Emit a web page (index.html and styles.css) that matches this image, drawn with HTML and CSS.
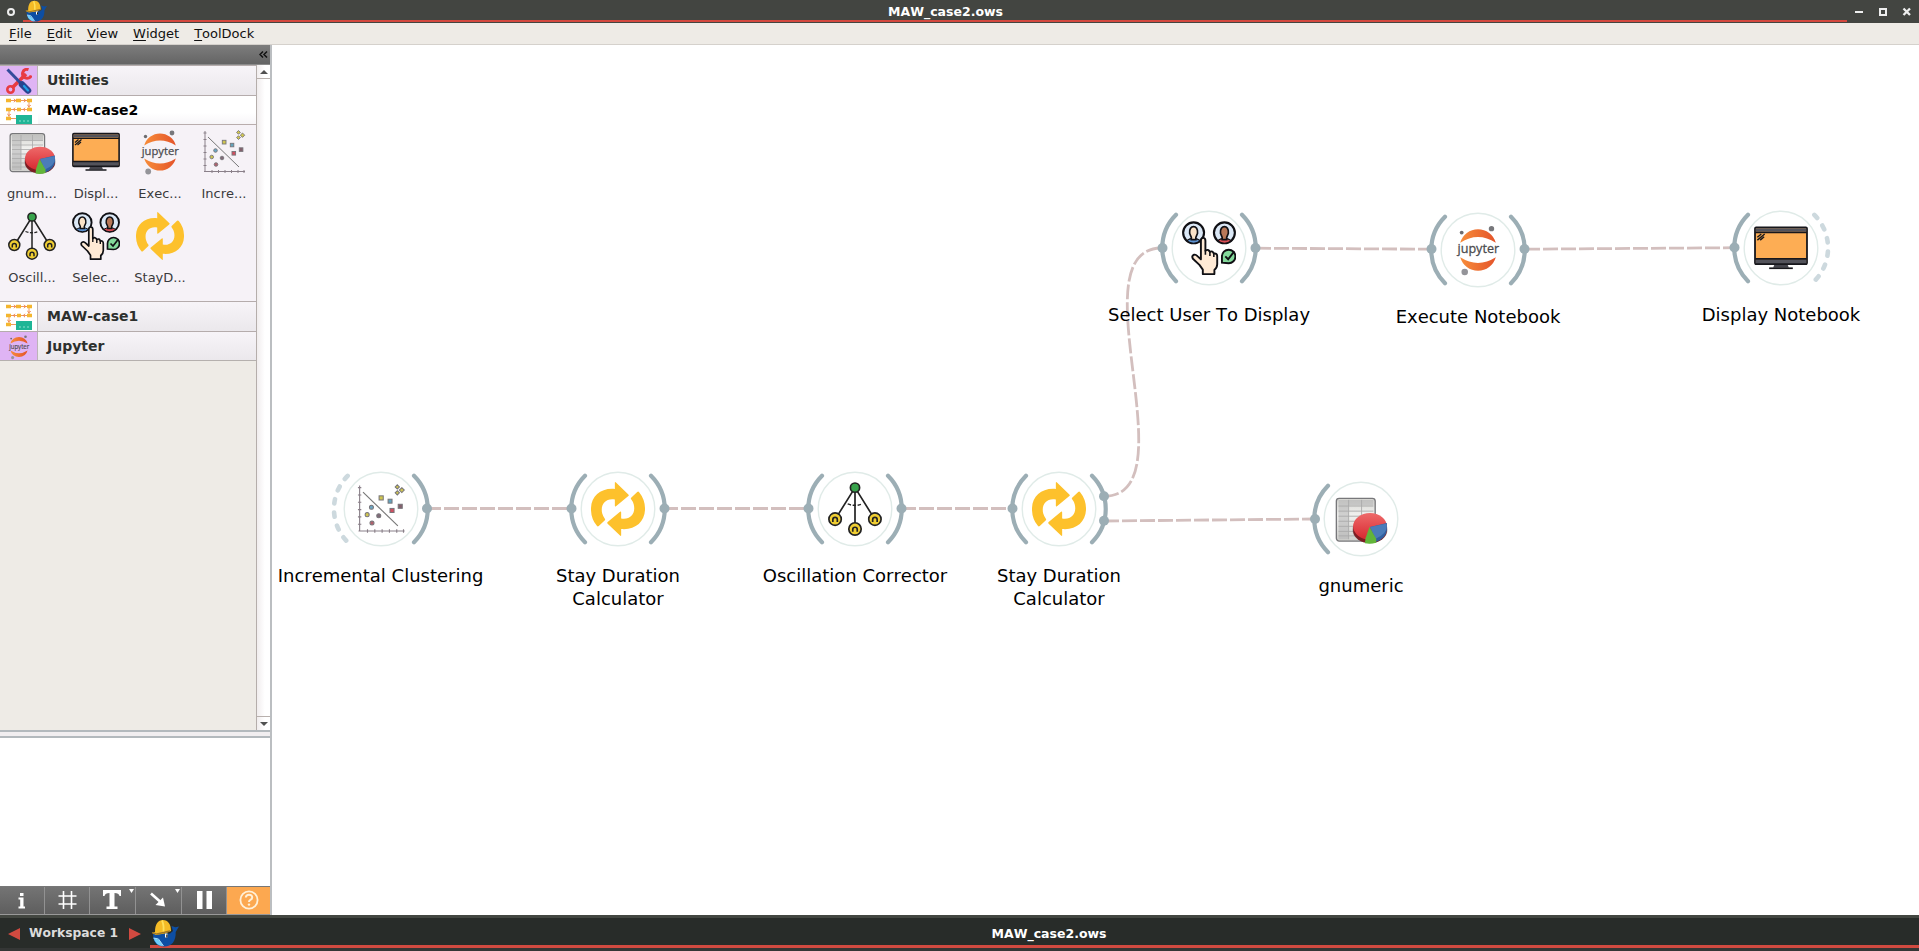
FILE: index.html
```html
<!DOCTYPE html>
<html lang="en">
<head>
<meta charset="utf-8">
<title>MAW_case2.ows</title>
<link rel="stylesheet" href="styles.css">
</head>
<body>
<svg class="defs" width="0" height="0" aria-hidden="true">
  <defs>
    <linearGradient id="jup" x1="0" x2="1" y1="0" y2="0"><stop offset="0" stop-color="#f78d3a"/><stop offset="1" stop-color="#e4542a"/></linearGradient>
    <linearGradient id="sheet" x1="0" x2="0" y1="0" y2="1"><stop offset="0" stop-color="#d4d4d0"/><stop offset=".4" stop-color="#f1f1ef"/><stop offset="1" stop-color="#cfcfcc"/></linearGradient>
    <linearGradient id="pie" x1="0" x2="0" y1="0" y2="1"><stop offset="0" stop-color="#ee6a6a"/><stop offset="1" stop-color="#d82830"/></linearGradient>
    <symbol id="i-gnumeric" viewBox="0 0 48 48">
      <rect x="2.100" y="5.600" width="34.500" height="38" rx="2.500" fill="url(#sheet)" stroke="#77777a" stroke-width="1.200"/>
      <path d="M4 7h31v5H4zM4 12h9v30H4z" fill="#a9a9aa" opacity=".45"/>
      <path d="M13 7v35M24.500 7v35M4 12.500h31M4 17h31M4 21.500h31M4 26h31M4 30.500h31M4 35h31M4 39h31" stroke="#aaa" stroke-width=".8" fill="none"/>
      <ellipse cx="32" cy="33.500" rx="15.600" ry="12" fill="#3b2730" opacity=".35"/>
      <path d="M17 30.500v4a15 10.800 0 0 0 30 0v-4z" fill="#7e1c22"/>
      <ellipse cx="32" cy="30.500" rx="15" ry="11.800" fill="url(#pie)"/>
      <path d="M32 31 47 27.500v6.500q-1 7.500-10 10.500z" fill="#3160a0"/>
      <path d="M32 31 46.800 28q1.500 9-9.800 13.500z" fill="#4b7cb9"/>
      <path d="M31.500 31l6 10.500v3.500q-5 1.500-10 .5l.5-4.500z" fill="#62b53a"/>
    </symbol>
    <symbol id="i-monitor" viewBox="0 0 48 48">
      <rect x=".9" y="5.600" width="46.200" height="32.800" rx="1" fill="#fdad54" stroke="#17171c" stroke-width="1.600"/>
      <path d="M1.500 6.500h45v3h-45z" fill="#53535b"/><path d="M1 10.300h46" stroke="#17171c" stroke-width="1.300"/>
      <path d="M1.500 34h45v4.200h-45z" fill="#53535b"/><path d="M1 33.600h46M1 38.300h46" stroke="#17171c" stroke-width="1.500"/>
      <path d="M18 39h12l1 2.500H17z" fill="#44444c"/><path d="M13.500 42h21" stroke="#17171c" stroke-width="1.500"/>
      <path d="M3 17 9.500 11.500M3 14.500l3.500-3M5.500 17 9 14" stroke="#17171c" stroke-width="1.200"/>
    </symbol>
    <symbol id="i-jupyter" viewBox="0 0 48 48">
      <path d="M8.200 17.500a16.400 16.400 0 0 1 31.600 0Q24 7.500 8.200 17.500z" fill="url(#jup)"/>
      <path d="M8.200 30.500a16.400 16.400 0 0 0 31.600 0Q24 40.500 8.200 30.500z" fill="url(#jup)"/>
      <circle cx="9.500" cy="8.500" r="1.700" fill="#6c6c70"/><circle cx="36" cy="5" r="2.400" fill="#77777b"/><circle cx="12.200" cy="43.500" r="2.900" fill="#949499"/>
      <text x="24.300" y="26.800" text-anchor="middle" textLength="37" lengthAdjust="spacingAndGlyphs" class="jt">jupyter</text>
    </symbol>
    <symbol id="i-cluster" viewBox="0 0 48 48">
      <g fill="none" stroke="#8a8089" stroke-width="1"><path d="M5 3v41M4 43.500h41M3.500 5h3M3.500 11.500h3M3.500 18h3M3.500 24.500h3M3.500 31h3M3.500 37.500h3M12 42v3M18.500 42v3M25 42v3M31.500 42v3M38 42v3M44 42v3"/><path d="M8 9 39 39" stroke="#777"/></g>
      <g stroke="#77757a" stroke-width=".9"><g fill="#cfc54f"><rect x="22.300" y="12.300" width="3.700" height="3.700"/><circle cx="11.700" cy="29" r="1.800"/><path d="M38.500 2.500l1.900 1.900-1.900 1.900-1.900-1.900zM42.500 5l2.200 2.200-2.200 2.200-2.200-2.200zM38.500 7.700l1.900 1.900-1.900 1.900-1.900-1.900z"/></g><rect x="30.300" y="15.300" width="3.500" height="3.500" fill="#62a3bd"/><circle cx="15.500" cy="22.500" r="1.800" fill="#6aa7c4"/><rect x="39.300" y="19.800" width="3.600" height="3.600" fill="#83606c"/><rect x="32" y="23.500" width="3.600" height="3.600" fill="#d04f60"/><circle cx="22" cy="30" r="1.800" fill="#806a78"/><circle cx="16" cy="36.500" r="1.800" fill="#b0606c"/></g>
    </symbol>
    <symbol id="i-osc" viewBox="0 0 48 48">
      <path d="M24 5 6.500 33M24 5v36M24 5l17.500 28" stroke="#222" stroke-width="1.500"/><path d="M17.500 19.500q6.500 2.500 13 0" fill="none" stroke="#222" stroke-width="1.300" stroke-dasharray="3 1.500"/>
      <circle cx="24" cy="5" r="4.100" fill="#37a34b" stroke="#222" stroke-width="1.500"/>
      <g fill="#f0ce32" stroke="#222" stroke-width="1.500"><circle cx="6.300" cy="33" r="5.500"/><circle cx="41.700" cy="33" r="5.500"/><circle cx="24" cy="41.700" r="5.500"/></g>
      <g fill="none" stroke="#222" stroke-width="1.500"><path d="M4.300 35.500v-2a2 2 0 0 1 4 0v2M39.700 35.500v-2a2 2 0 0 1 4 0v2M22 44.200v-2a2 2 0 0 1 4 0v2"/></g>
    </symbol>
    <symbol id="i-select" viewBox="0 0 48 48">
      <g stroke="#101014" stroke-width="1.900"><circle cx="10.300" cy="10.500" r="9.300" fill="#dbe8f6"/><circle cx="37.700" cy="10.500" r="9.300" fill="#dbe8f6"/></g>
      <path d="M4 17.500q6-4 12.500 0-6 4.500-12.500 0z" fill="#5c91cf" stroke="#101014"/><path d="M31.500 17.500q6-4 12.500 0-6 4.500-12.500 0z" fill="#d94e55" stroke="#101014"/>
      <path d="M6.800 11c-1-8 8-8 7 0l-1.500 3.500v2h-4v-2z" fill="#fbe3c8" stroke="#101014" stroke-width="1.500"/><path d="M34.200 11c-1-8 8-8 7 0l-1.500 3.500v2h-4v-2z" fill="#b87858" stroke="#101014" stroke-width="1.500"/>
      <path d="M16.800 34V17.500q0-2.500 2-2.500t2 2.500v9q2.500-2 4 1 2.500-1.500 3.500 1.500 3-.5 3 2.500v7q0 3-2.500 5v3.700H18.500v-4l-3-4.200-5.800-5.500q-1.500-2.500 1-3.500 1.500-.4 3 1.200z" fill="#ffead5" stroke="#101014" stroke-width="1.700" stroke-linejoin="round"/>
      <path d="M20.800 26v4M24.800 27v4M28.300 29v3" stroke="#101014" stroke-width="1.400"/>
      <path d="M35.500 37v-5.500a6 6 0 1 1 6 6z" fill="#83d99b" stroke="#101014" stroke-width="1.700"/><path d="M38.500 31.500l2.500 2.500 5.500-7" fill="none" stroke="#101014" stroke-width="1.700"/>
    </symbol>
    <symbol id="i-stay" viewBox="0 0 48 48">
      <g fill="#fdc12c"><path id="sw" d="M0 25C-.5 13 8.500 5 21.200 6.200V.6q0-1 1-.2L33.200 11q.8.700 0 1.400L22.200 21.500q-1 .6-1-.5v-5.500C13 14 8 20 10 28q.8 2.800 2.300 4.600.7.900-.2 1.600l-5.200 5q-.9.800-1.700-.2Q.3 33 0 25z"/><use href="#sw" transform="rotate(180 24 24)"/></g>
    </symbol>
    <symbol id="i-flow" viewBox="0 0 26 26">
      <path d="M2 2.500h21v9M23 11.500H3v9h8" fill="none" stroke="#ee9a5c" stroke-width="1"/>
      <g fill="#f4b62f"><path d="M0 .8h5v3.400H0zM10 .8h5v3.400h-5zM21 .8h5v3.400h-5zM0 9.800h5v3.400H0zM11 9.800h4v3.400h-4zM21 9.800h5v3.400h-5zM0 18.800h5v3.400H0z"/></g>
      <path d="M8 .8l1.700 1.700L8 4.200M18 .8l1.700 1.700L18 4.200M21.300 7l1.700 1.700L24.700 7M9 9.800l-1.700 1.700L9 13.200M19 9.800l-1.700 1.700 1.700 1.700M1.300 16 3 17.700 4.700 16" fill="none" stroke="#ee7c45"/>
      <path d="M10 17h16v9H10z" fill="#1fb596"/><path d="M13 23h2M17 23h2M21 23h2" stroke="#8de0cd" stroke-width="1.200"/>
    </symbol>
    <symbol id="i-tools" viewBox="0 0 26 26">
      <path d="M6 20 20 6" stroke="#e83b43" stroke-width="3.500"/><circle cx="4.500" cy="21.500" r="3.200" fill="none" stroke="#e83b43" stroke-width="2.600"/><path d="M22.500 1.500a4.500 4.500 0 1 0 2.700 6" fill="none" stroke="#e83b43" stroke-width="3"/>
      <path d="M1.500 1.500 16 16.500" stroke="#344b9c" stroke-width="3"/><path d="M16 16.500 22 22.500" stroke="#29448f" stroke-width="6.500" stroke-linecap="round"/><path d="M18 18l4 4.500" stroke="#20a0e8" stroke-width="2.200" stroke-linecap="round"/>
    </symbol>
    <symbol id="i-whale" viewBox="0 0 28 28">
      <path d="M2 15C2 24 7 27.500 13 27.500c8 0 12-5.500 11.700-14.500L28 7.500l-3.500.8L20.500 7l1.500 5-3 2.500z" fill="#0d4ea3"/>
      <path d="M2.500 19q6 0 9.500 8.300Q4.500 26.500 2.500 19z" fill="#70cdfb"/><path d="M2.500 19l5 1 5 7" fill="none" stroke="#a9e1fc"/>
      <path d="M4 13C4 5 7 1 12 1c5 0 8 4 8 11l-6 2.500-9 1.500-4-2z" fill="#f4bb26"/><path d="M1 13.500l5 1.500 13-3" fill="none" stroke="#9c7529" stroke-width="1.300"/><path d="M11 1.500q2 4 1.500 11" stroke="#ffe05a" stroke-width="1.800" fill="none"/>
      <path d="M14 14.500h2.500v4H14z" fill="#fff"/><path d="M15.300 15.500h1.200v3h-1.200z" fill="#111"/>
    </symbol>
    <symbol id="disc" viewBox="-56 -56 112 112"><circle r="36.800" fill="#fff" stroke="#e0ebe8" stroke-width="1.400"/></symbol>
    <symbol id="arc" viewBox="-56 -56 112 112"><path d="M33 -33.200A47 47 0 0 1 33 33.200" fill="none" stroke="#9caeb5" stroke-width="4.200" stroke-linecap="round"/></symbol>
    <symbol id="arc-off" viewBox="-56 -56 112 112"><path d="M33 -33.500A47 47 0 0 1 33 33.500" fill="none" stroke="#cdd9de" stroke-width="4.600" stroke-linecap="round" stroke-dasharray="4.300 9.100" stroke-dashoffset="-.5"/></symbol>
  </defs>
</svg>

<div class="window">
  <header class="titlebar">
    <i class="dot"></i>
    <div class="title-main"><svg class="whale-s"><use href="#i-whale"/></svg><span class="wtitle">MAW_case2.ows</span></div>
    <svg class="wbtns" viewBox="0 0 72 23"><path d="M8 12h8" stroke="#eee" stroke-width="2"/><rect x="33" y="9" width="6" height="6" fill="none" stroke="#eee" stroke-width="2"/><path d="M56.500 8.500l6.500 6.500M63 8.500 56.500 15" stroke="#eee" stroke-width="2.300"/></svg>
  </header>
  <nav class="menu"><span><u>F</u>ile</span><span><u>E</u>dit</span><span><u>V</u>iew</span><span><u>W</u>idget</span><span><u>T</u>oolDock</span></nav>

  <main class="body">
    <aside class="side">
      <div class="dockhead"><svg viewBox="0 0 9 7"><path d="M4 .5l-3 3 3 3M8 .5l-3 3 3 3" fill="none" stroke="#111" stroke-width="1.500"/></svg></div>
      <div class="tools">
        <div class="list">
          <div class="cat"><span class="ci lilac"><svg><use href="#i-tools"/></svg></span><b>Utilities</b></div>
          <div class="cat open"><span class="ci"><svg><use href="#i-flow"/></svg></span><b>MAW-case2</b></div>
          <div class="grid">
            <div class="tool"><svg><use href="#i-gnumeric"/></svg><span>gnum...</span></div>
            <div class="tool"><svg><use href="#i-monitor"/></svg><span>Displ...</span></div>
            <div class="tool"><svg><use href="#i-jupyter"/></svg><span>Exec...</span></div>
            <div class="tool"><svg><use href="#i-cluster"/></svg><span>Incre...</span></div>
            <div class="tool"><svg><use href="#i-osc"/></svg><span>Oscill...</span></div>
            <div class="tool"><svg><use href="#i-select"/></svg><span>Selec...</span></div>
            <div class="tool"><svg><use href="#i-stay"/></svg><span>StayD...</span></div>
          </div>
          <div class="cat"><span class="ci"><svg><use href="#i-flow"/></svg></span><b>MAW-case1</b></div>
          <div class="cat"><span class="ci lilac"><svg><use href="#i-jupyter"/></svg></span><b>Jupyter</b></div>
        </div>
        <div class="scroll"><span class="sb"><i class="up"></i></span><span class="sb end"><i class="down"></i></span></div>
      </div>
      <div class="splitter"></div>
      <div class="info"></div>
      <div class="actions">
        <span><svg viewBox="0 0 45 28"><path d="M18.500 10.500h5v9H25v2h-6.500v-2h1.700v-7h-1.700z" fill="#fff"/><rect x="20" y="6" width="3.500" height="3" fill="#fff"/></svg></span>
        <span><svg viewBox="0 0 45 28"><path d="M18.500 4v18M26.500 4v18M13.500 9h18M13.500 17h18" stroke="#fff" stroke-width="1.600"/></svg></span>
        <span><svg viewBox="0 0 45 28"><path d="M13 3h18v6h-1.500q-.5-3-5-3v13.500h3V22H16.500v-2.500h3V6q-4.500 0-5 3H13z" fill="#fff"/><path d="M39 2h5l-2.500 4z" fill="#fff"/></svg></span>
        <span><svg viewBox="0 0 45 28"><path d="M15 6.500l9 8" stroke="#fff" stroke-width="2.600"/><path d="M29 19.500l-9.500-1.500 7.500-7.500z" fill="#fff"/><path d="M39 2h5l-2.500 4z" fill="#fff"/></svg></span>
        <span><svg viewBox="0 0 45 28"><path d="M15 4h5.500v18H15zM24.500 4H30v18h-5.500z" fill="#fff"/></svg></span>
        <span class="help"><svg viewBox="0 0 45 28"><circle cx="22" cy="13" r="8.600" fill="none" stroke="#fff0d8" stroke-width="1.800"/><path d="M18.800 10.500q.3-2.700 3.200-2.700 3.300 0 3.200 2.700 0 1.500-1.800 2.400-1.400.7-1.400 2.100" fill="none" stroke="#fff0d8" stroke-width="2"/><circle cx="22" cy="17.600" r="1.200" fill="#fff0d8"/></svg></span>
      </div>
    </aside>

    <section class="canvas">
      <svg class="links" viewBox="271 45 1648 870">
        <g fill="none" stroke="#d3bfbe" stroke-width="2.800" stroke-dasharray="15 3">
          <path d="M426 508.500H571M663 508.500H808M901 508.500h111"/>
          <path d="M1104 496.300C1192 496.300 1074 248 1162 248"/><path d="M1104 521l211-2"/>
          <path d="M1256 248.200l176 1M1525 249.200l210-1.500"/>
        </g>
      </svg>

      <div class="node" style="left:109.500px;top:463.500px"><svg class="art"><use href="#disc"/><use href="#arc-off" class="flip"/><use href="#arc"/></svg><svg class="ico"><use href="#i-cluster"/></svg><span>Incremental Clustering</span></div>
      <div class="node" style="left:347px;top:463.500px"><svg class="art"><use href="#disc"/><use href="#arc" class="flip"/><use href="#arc"/></svg><svg class="ico"><use href="#i-stay"/></svg><span>Stay Duration<br>Calculator</span></div>
      <div class="node" style="left:584px;top:463.500px"><svg class="art"><use href="#disc"/><use href="#arc" class="flip"/><use href="#arc"/></svg><svg class="ico"><use href="#i-osc"/></svg><span>Oscillation Corrector</span></div>
      <div class="node" style="left:788px;top:463.500px"><svg class="art"><use href="#disc"/><use href="#arc" class="flip"/><use href="#arc"/></svg><svg class="ico"><use href="#i-stay"/></svg><span>Stay Duration<br>Calculator</span></div>
      <div class="node" style="left:938px;top:203px"><svg class="art"><use href="#disc"/><use href="#arc" class="flip"/><use href="#arc"/></svg><svg class="ico"><use href="#i-select"/></svg><span>Select User To Display</span></div>
      <div class="node" style="left:1207px;top:204.500px"><svg class="art"><use href="#disc"/><use href="#arc" class="flip"/><use href="#arc"/></svg><svg class="ico"><use href="#i-jupyter"/></svg><span>Execute Notebook</span></div>
      <div class="node" style="left:1510px;top:202.500px"><svg class="art"><use href="#disc"/><use href="#arc" class="flip"/><use href="#arc-off"/></svg><svg class="ico"><use href="#i-monitor"/></svg><span>Display Notebook</span></div>
      <div class="node" style="left:1090px;top:474px"><svg class="art"><use href="#disc"/><use href="#arc" class="flip"/></svg><svg class="ico"><use href="#i-gnumeric"/></svg><span>gnumeric</span></div>

      <svg class="links" viewBox="271 45 1648 870">
        <g fill="#9caeb5"><circle cx="427" cy="508.500" r="5"/><circle cx="571.500" cy="508.500" r="5"/><circle cx="664.500" cy="508.500" r="5"/><circle cx="808.500" cy="508.500" r="5"/><circle cx="901.500" cy="508.500" r="5"/><circle cx="1012.500" cy="508.500" r="5"/><circle cx="1104" cy="496.300" r="5"/><circle cx="1104" cy="520.700" r="5"/><circle cx="1162.500" cy="248" r="5"/><circle cx="1255.500" cy="248" r="5"/><circle cx="1431.500" cy="249" r="5"/><circle cx="1524.500" cy="249" r="5"/><circle cx="1734.500" cy="247.500" r="5"/><circle cx="1315" cy="519" r="5"/></g>
      </svg>
    </section>
  </main>

  <footer class="taskbar">
    <i class="tri left"></i><span class="ws">Workspace 1</span><i class="tri right"></i>
    <div class="task"><svg class="whale-l"><use href="#i-whale"/></svg><span class="wtitle">MAW_case2.ows</span></div>
  </footer>
</div>
</body>
</html>
```

FILE: styles.css
```css
* { box-sizing: border-box; }
body { margin: 0; font-family: "DejaVu Sans", sans-serif; font-kerning: none; overflow: hidden; background: #fff; }
.defs { position: absolute; }
svg { display: block; flex: none; }
.window { width: 1919px; height: 951px; display: flex; flex-direction: column; }

.titlebar { height: 23px; background: #434541; display: flex; flex: none; }
.dot { width: 8px; height: 8px; margin: 8px 8px 0 7px; border: 2px solid #eee; border-radius: 4px; flex: none; }
.title-main { width: 1824px; height: 22px; border-bottom: 2px solid #d4483f; display: flex; }
.whale-s { width: 22px; height: 22px; margin-left: 2px; }
.wtitle { flex: 1; text-align: center; color: #fff; font-weight: bold; font-size: 12.5px; line-height: 23px; }
.title-main .wtitle { padding-right: 3px; }
.wbtns { width: 72px; height: 23px; }

.menu { height: 22px; flex: none; background: #eeebe6; border-bottom: 1px solid #d5d1cc; display: flex; gap: 15px; padding-left: 9px; font-size: 13px; line-height: 22px; color: #111; }
.menu u { text-underline-offset: 2px; text-decoration-thickness: 1px; }

.body { display: flex; height: 870px; flex: none; }
.side { width: 272px; border-right: 2px solid #bbbec1; display: flex; flex-direction: column; flex: none; }
.dockhead { height: 20px; background: linear-gradient(#7d7d7d, #646464); border-bottom: 1px solid #8a8a8a; display: flex; justify-content: flex-end; padding: 6px 2px 0 0; flex: none; }
.dockhead svg { width: 9px; height: 7px; }
.tools { display: flex; height: 665px; background: #eeebe6; flex: none; }
.list { width: 257px; border-right: 1px solid #b5aeab; }
.cat { height: 29.5px; display: flex; border-top: 1px solid #b5acac; background: linear-gradient(#f7f4f8, #ebe8ec); color: #2d302e; }
.cat:last-child { border-bottom: 1px solid #b5b0ae; height: 30.5px; }
.cat.open { background: linear-gradient(#fff 60%, #f7f5f8); color: #000; height: 29.5px; }
.cat b { font-size: 14px; line-height: 28px; padding-left: 9px; }
.ci { width: 38px; border-right: 1px solid #bcb4b8; padding: 2px 0 0 6px; background: #fff; }
.ci.lilac { background: #dfb4f4; }
.open .ci { border-right-color: transparent; }
.ci svg { width: 26px; height: 26px; }
.grid { height: 177px; border-top: 1px solid #b9adad; background: #f6f2f7; display: grid; grid-template-columns: repeat(4, 64px); grid-auto-rows: 84px; }
.tool { display: flex; flex-direction: column; align-items: center; padding-top: 3px; font-size: 13px; color: #3a3a3c; line-height: 15px; gap: 10px; }
.tool svg { width: 48px; height: 48px; }
.jt { font-family: "Open Sans", sans-serif; font-size: 11.5px; fill: #4a4a4d; stroke: #4a4a4d; stroke-width: .25px; }
.scroll { width: 13px; flex: 1; background: linear-gradient(90deg, #f1edee, #fff 60%); display: flex; flex-direction: column; justify-content: space-between; }
.sb { height: 14px; display: flex; justify-content: center; align-items: center; border-bottom: 1px solid #b8b0ad; }
.sb.end { border-bottom: 0; border-top: 1px solid #b8b0ad; }
.up, .down { border: 4px solid transparent; border-top: 0; border-bottom-color: #505050; }
.down { border-top: 4px solid #505050; border-bottom: 0; }
.splitter { height: 8px; background: #f1eef0; border: solid #b3b9bd; border-width: 2px 0; flex: none; }
.info { flex: 1; background: #fff; }
.actions { height: 29px; flex: none; display: grid; grid-template-columns: 45px 45px 46px 46px 45px 43px; background: linear-gradient(#747474, #5e5e5e); border-top: 1px solid #777; border-bottom: 1px solid #999; }
.actions span { border-right: 1px solid #929292; overflow: hidden; }
.actions .help { background: #fca850; border: 0; }
.actions svg { width: 45px; height: 28px; }

.canvas { flex: 1; position: relative; margin-left: -1px; }
.links { position: absolute; left: 0; top: 0; width: 1648px; height: 870px; pointer-events: none; }
.node { position: absolute; width: 0; height: 0; }
.art { position: absolute; left: -56px; top: -56px; width: 112px; height: 112px; }
.art .flip { transform: scaleX(-1); transform-origin: 56px 56px; }
.ico { position: absolute; left: -27px; top: -27px; width: 54px; height: 54px; }
.node span { position: absolute; top: 55px; left: -150px; width: 300px; text-align: center; font-size: 18px; line-height: 23px; color: #000; }

.taskbar { height: 36px; background: linear-gradient(#434741 0 3px, #282c29 3px 33px, #343635 33px); display: flex; flex: none; align-items: flex-start; }
.tri { border: 6px solid transparent; margin-top: 13px; }
.tri.left { border-left: 0; border-right: 12px solid #d14a40; margin-left: 8px; }
.tri.right { border-right: 0; border-left: 12px solid #d14a40; margin-right: 9px; }
.ws { width: 109px; text-align: center; color: #dcdcdc; font-weight: bold; font-size: 12.3px; line-height: 37px; padding-right: 2px; }
.task { flex: 1; height: 33px; border-bottom: 3px solid #d14a40; display: flex; }
.whale-l { width: 28px; height: 28px; margin: 4px 0 0 1px; }
.task .wtitle { line-height: 37px; }
```
